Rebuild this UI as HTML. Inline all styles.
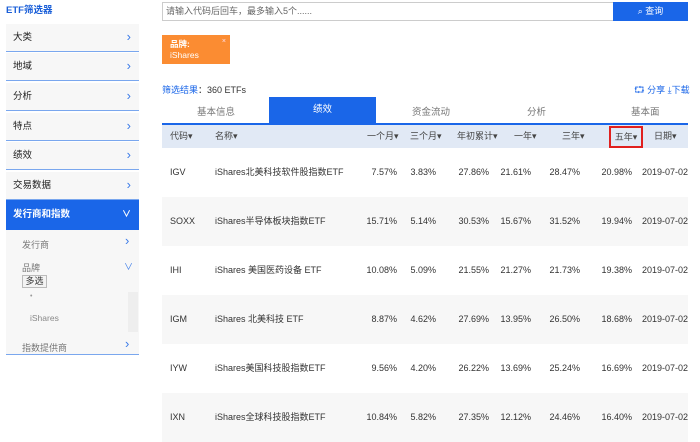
<!DOCTYPE html>
<html><head><meta charset="utf-8"><style>
*{box-sizing:border-box;margin:0;padding:0}
body{width:700px;height:428px;overflow:hidden;background:#fff;font-family:"Liberation Sans","Noto Sans CJK SC",sans-serif;font-size:9px;color:#333;position:relative;white-space:nowrap}
.abs{position:absolute}
.item{position:absolute;left:6px;width:133px;height:28px;background:#f7f7f7;border-bottom:1px solid #7aa7ee;font-size:9.5px;line-height:28px;padding-left:7px;color:#222}
.item .ar{position:absolute;right:8px;top:0;color:#3b7be8;font-size:13px;line-height:26px}
.hd span{position:absolute;top:0;line-height:22px;color:#444}
.row{position:absolute;left:162px;width:526px;height:49px;line-height:49px}
.row span{position:absolute;top:0;white-space:nowrap}
.r{text-align:right}
</style></head><body>
<div class="abs" style="left:6px;top:2px;color:#1a5fd8;font-weight:bold;font-size:9.5px">ETF筛选器</div>
<div class="item" style="top:24px">大类<span class="ar">&#x203A;</span></div>
<div class="item" style="top:53px">地域<span class="ar">&#x203A;</span></div>
<div class="item" style="top:83px">分析<span class="ar">&#x203A;</span></div>
<div class="item" style="top:113px">特点<span class="ar">&#x203A;</span></div>
<div class="item" style="top:142px">绩效<span class="ar">&#x203A;</span></div>
<div class="item" style="top:172px">交易数据<span class="ar">&#x203A;</span></div>
<div class="item" style="top:200px;height:30px;line-height:30px;background:#1a66e8;color:#fff;font-weight:bold;border:none">发行商和指数<span class="ar" style="color:#fff;font-size:9px;line-height:28px">&#x2228;</span></div>
<div class="abs" style="left:6px;top:230px;width:133px;height:125px;background:#f7f7f7;border-bottom:1px solid #7aa7ee"></div>
<div class="abs" style="left:22px;top:238px;color:#777">发行商</div>
<div class="abs" style="left:125px;top:233px;color:#3b7be8;font-size:13px">&#x203A;</div>
<div class="abs" style="left:22px;top:261px;color:#777">品牌</div>
<div class="abs" style="left:124px;top:260px;color:#3b7be8;font-size:9px">&#x2228;</div>
<div class="abs" style="left:22px;top:275px;width:25px;height:13px;border:1px solid #bbb;background:#f3f3f3;font-size:9px;line-height:11px;text-align:center">多选</div>
<div class="abs" style="left:30px;top:293px;color:#999;font-size:7px">•</div>
<div class="abs" style="left:30px;top:313px;color:#888;font-size:8.5px">iShares</div>
<div class="abs" style="left:128px;top:292px;width:10px;height:40px;background:#eee"></div>
<div class="abs" style="left:22px;top:341px;color:#777">指数提供商</div>
<div class="abs" style="left:125px;top:336px;color:#3b7be8;font-size:13px">&#x203A;</div>

<div class="abs" style="left:162px;top:2px;width:452px;height:19px;border:1px solid #ccc;line-height:17px;padding-left:3px;color:#666">请输入代码后回车，最多输入5个......</div>
<div class="abs" style="left:613px;top:2px;width:75px;height:19px;background:#1a66e8;color:#fff;line-height:19px;text-align:center">&#x2315; 查询</div>
<div class="abs" style="left:162px;top:35px;width:68px;height:29px;background:#fb8c32;color:#fff;font-size:8.5px;padding:4px 0 0 8px;line-height:11px"><b>品牌:</b><br>iShares<span style="position:absolute;right:4px;top:1px;font-size:7px;color:#fde">×</span></div>
<div class="abs" style="left:162px;top:83px;font-size:9px"><span style="color:#1a66e8">筛选结果</span>：360 ETFs</div>
<div class="abs" style="left:634px;top:83px;font-size:9px;color:#1a66e8">&#x2B94; 分享 &#x2913;下载</div>

<div class="abs" style="left:162px;top:97px;width:526px;height:26px;font-size:9.5px;color:#777">
<span class="abs" style="left:35px;top:7px">基本信息</span>
<div class="abs" style="left:107px;top:0;width:107px;height:26px;background:#1a66e8;color:#fff;text-align:center;line-height:26px">绩效</div>
<span class="abs" style="left:250px;top:7px">资金流动</span>
<span class="abs" style="left:365px;top:7px">分析</span>
<span class="abs" style="left:469px;top:7px">基本面</span>
</div>
<div class="abs hd" style="left:162px;top:123px;width:526px;height:25px;background:#e1e9f5;border-top:2px solid #1a66e8">
<span style="left:8px">代码▾</span><span style="left:53px">名称▾</span>
<span style="left:205px">一个月▾</span><span style="left:248px">三个月▾</span><span style="left:295px">年初累计▾</span>
<span style="left:352px">一年▾</span><span style="left:400px">三年▾</span>
<span style="left:447px;top:1px;width:34px;height:22px;border:2px solid #e0201e;line-height:18px;text-align:center">五年▾</span>
<span style="left:492px">日期▾</span>
</div>

<div id="rows"></div>
<script>
var d=[["IGV","iShares北美科技软件股指数ETF","7.57%","3.83%","27.86%","21.61%","28.47%","20.98%"],
["SOXX","iShares半导体板块指数ETF","15.71%","5.14%","30.53%","15.67%","31.52%","19.94%"],
["IHI","iShares 美国医药设备 ETF","10.08%","5.09%","21.55%","21.27%","21.73%","19.38%"],
["IGM","iShares 北美科技 ETF","8.87%","4.62%","27.69%","13.95%","26.50%","18.68%"],
["IYW","iShares美国科技股指数ETF","9.56%","4.20%","26.22%","13.69%","25.24%","16.69%"],
["IXN","iShares全球科技股指数ETF","10.84%","5.82%","27.35%","12.12%","24.46%","16.40%"]];
var R=[235,274,327,369,418,470],h="";
d.forEach(function(r,i){h+='<div class="row" style="top:'+(148+i*49)+'px;background:'+(i%2?'#f7f7f7':'#fff')+'"><span style="left:8px">'+r[0]+'</span><span style="left:53px">'+r[1]+'</span>';
for(var j=0;j<6;j++)h+='<span class="r" style="left:'+(R[j]-60)+'px;width:60px">'+r[j+2]+'</span>';
h+='<span style="left:480px;width:60px">2019-07-02</span></div>';});
document.getElementById("rows").innerHTML=h;
</script>
</body></html>
